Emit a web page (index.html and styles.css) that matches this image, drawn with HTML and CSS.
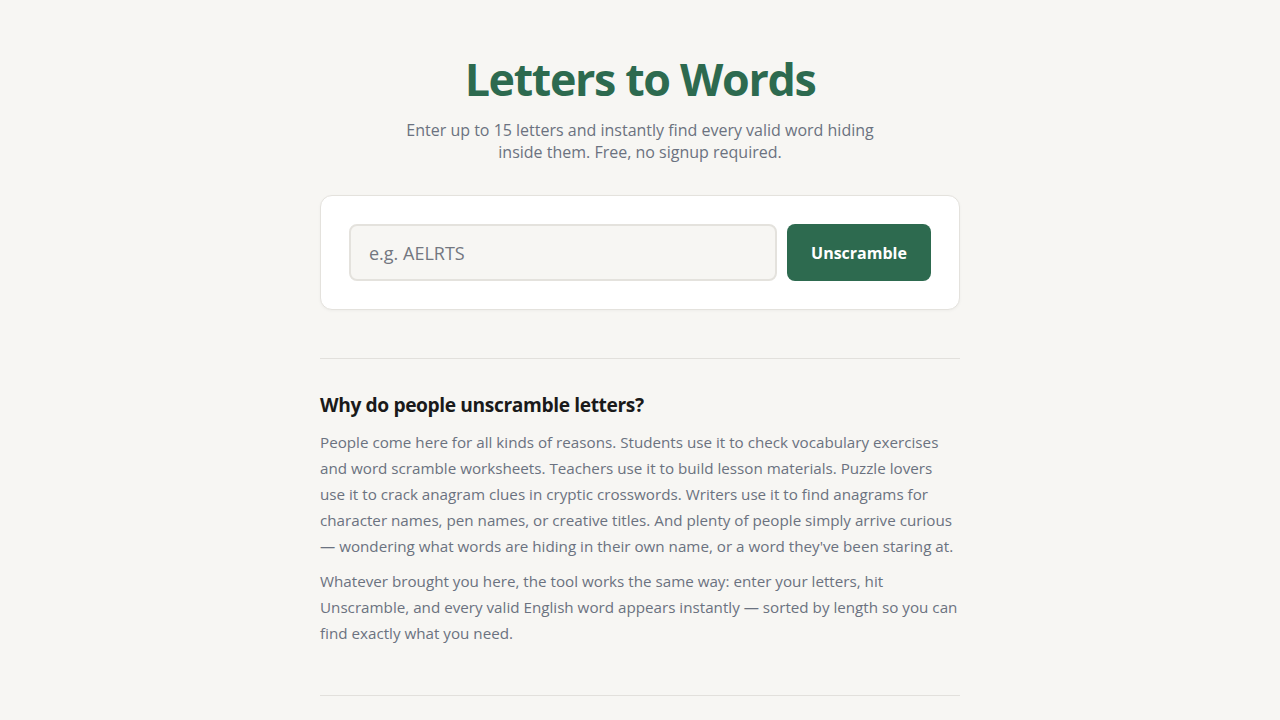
FILE: index.html
```html
<!DOCTYPE html>
<html lang="en">
<head>
<meta charset="utf-8">
<title>Letters to Words</title>
<link rel="stylesheet" href="styles.css">
</head>
<body>
<main class="page">
  <header class="hero">
    <h1 class="hero-title">Letters to Words</h1>
    <p class="hero-sub">Enter up to 15 letters and instantly find every valid word hiding inside them. Free, no signup required.</p>
  </header>

  <form class="search-card" onsubmit="return false">
    <input class="search-input" type="text" placeholder="e.g. AELRTS" maxlength="15">
    <button class="search-btn" type="submit">Unscramble</button>
  </form>

  <hr class="rule">

  <section class="article">
    <h2 class="article-title">Why do people unscramble letters?</h2>
    <p class="article-text">People come here for all kinds of reasons. Students use it to check vocabulary exercises and word scramble worksheets. Teachers use it to build lesson materials. Puzzle lovers use it to crack anagram clues in cryptic crosswords. Writers use it to find anagrams for character names, pen names, or creative titles. And plenty of people simply arrive curious — wondering what words are hiding in their own name, or a word they've been staring at.</p>
    <p class="article-text">Whatever brought you here, the tool works the same way: enter your letters, hit Unscramble, and every valid English word appears instantly — sorted by length so you can find exactly what you need.</p>
  </section>

  <hr class="rule rule-end">
</main>
</body>
</html>
```

FILE: styles.css
```css
* {
  box-sizing: border-box;
}

body {
  margin: 0;
  background: #f7f6f3;
  font-family: "Open Sans", "Noto Sans", sans-serif;
  color: #1a1a1a;
}

.page {
  width: 640px;
  margin: 0 auto;
  padding-top: 52px;
}

.hero {
  text-align: center;
}

.hero-title {
  margin: 0;
  font-size: 2.8rem;
  line-height: 54px;
  font-weight: 700;
  letter-spacing: -0.03em;
  color: #2d6a4f;
}

.hero-sub {
  max-width: 480px;
  margin: 13px auto 0;
  font-size: 16px;
  line-height: 22px;
  color: #6b7280;
}

.search-card {
  display: flex;
  gap: 10px;
  margin-top: 32px;
  padding: 28px;
  background: #ffffff;
  border: 1px solid #e4e2dd;
  border-radius: 12px;
  box-shadow: 0 1px 3px rgba(0, 0, 0, 0.04);
}

.search-input {
  flex: 1;
  height: 57px;
  padding: 0 18px;
  background: #f7f6f3;
  border: 2px solid #e4e2dd;
  border-radius: 8px;
  font-family: inherit;
  font-size: 18px;
  color: #1a1a1a;
  outline: none;
}

.search-input::placeholder {
  color: #737780;
}

.search-btn {
  width: 144px;
  height: 57px;
  border: 0;
  border-radius: 8px;
  background: #2d6a4f;
  color: #ffffff;
  font-family: inherit;
  font-size: 16px;
  font-weight: 700;
  cursor: pointer;
}

.rule {
  margin: 48px 0 0;
  border: 0;
  border-top: 1px solid #e2e0dc;
}

.article {
  padding-top: 32px;
}

.article-title {
  margin: 0 0 10px;
  font-size: 1.2rem;
  line-height: 28px;
  font-weight: 700;
  letter-spacing: -0.02em;
  color: #1a1a1a;
}

.article-text {
  margin: 0 0 9px;
  font-size: 0.95rem;
  line-height: 26px;
  color: #6b7280;
}

.rule-end {
  margin-top: 49px;
}
```
